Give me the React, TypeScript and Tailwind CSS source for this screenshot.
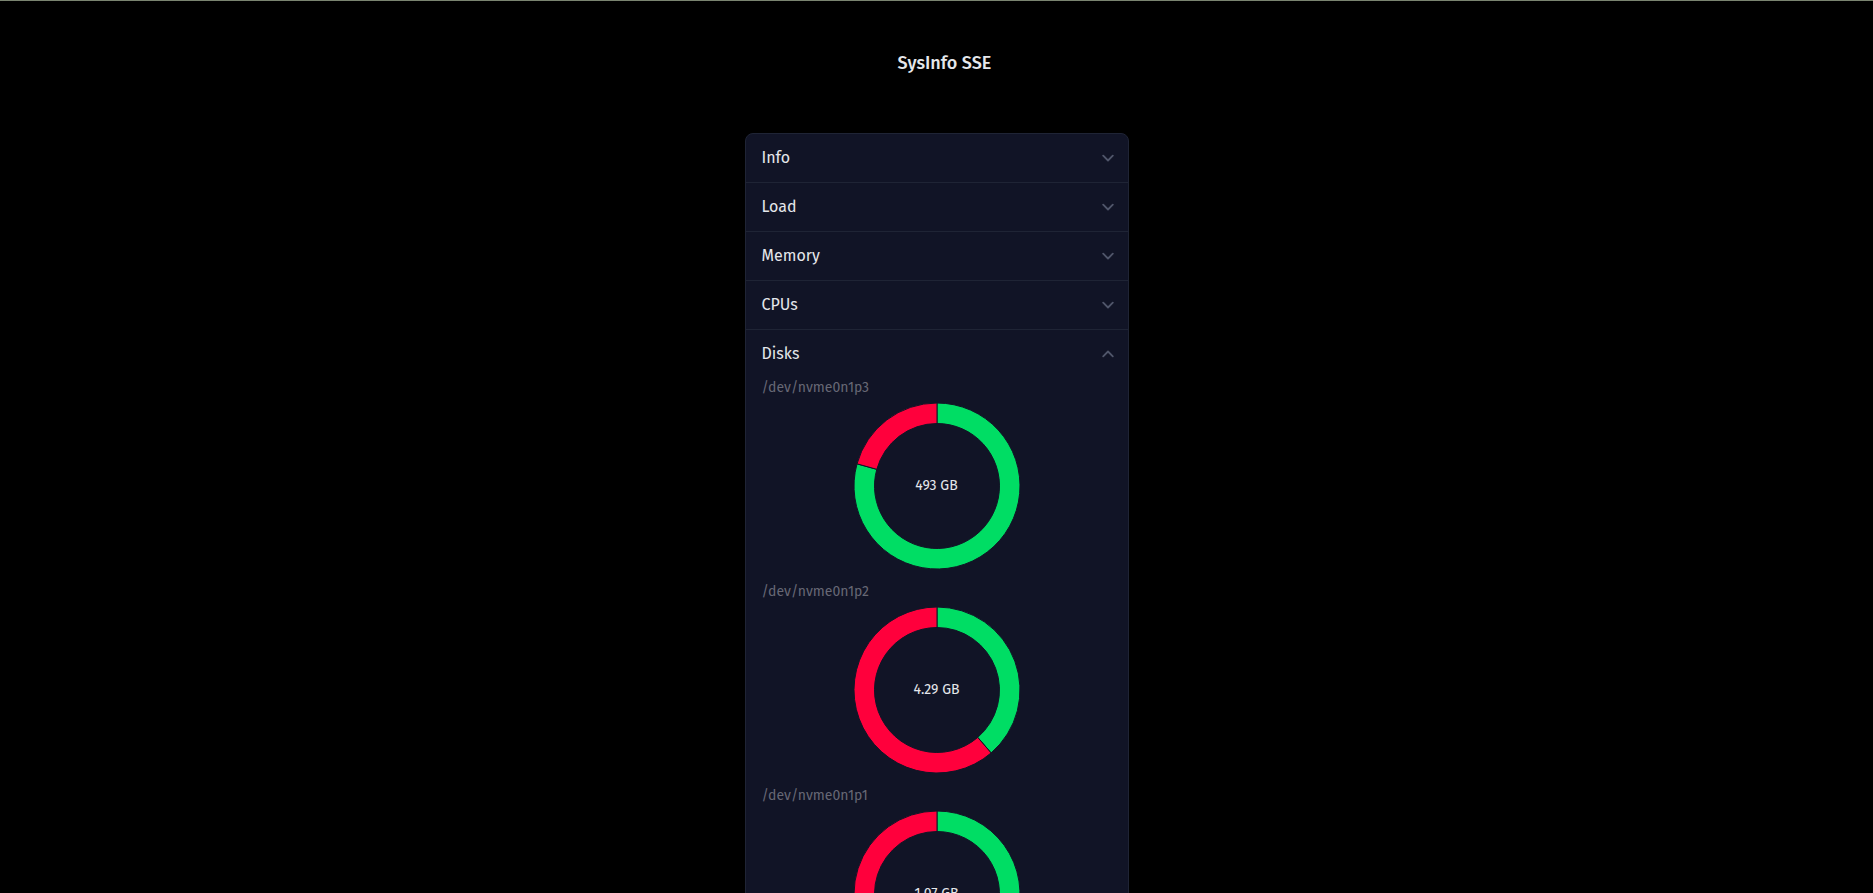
import { useState } from "react";

type Disk = { name: string; size: string; free: number };

const disks: Disk[] = [
  { name: "/dev/nvme0n1p3", size: "493 GB", free: 0.793 },
  { name: "/dev/nvme0n1p2", size: "4.29 GB", free: 0.387 },
  { name: "/dev/nvme0n1p1", size: "1.07 GB", free: 0.6 },
];

function arc(from: number, to: number, outer: number, inner: number) {
  const point = (t: number, r: number) => {
    const a = t * 2 * Math.PI;
    return `${(r * Math.sin(a)).toFixed(3)} ${(-r * Math.cos(a)).toFixed(3)}`;
  };
  const large = to - from > 0.5 ? 1 : 0;
  return `M${point(from, outer)}A${outer} ${outer} 0 ${large} 1 ${point(to, outer)}L${point(to, inner)}A${inner} ${inner} 0 ${large} 0 ${point(from, inner)}Z`;
}

function Donut({ disk }: { disk: Disk }) {
  return (
    <div className="grid place-items-center">
      <svg
        viewBox="-88 -88 176 176"
        className="col-start-1 row-start-1 size-44"
        stroke="#111426"
        strokeWidth="1"
        aria-hidden="true"
      >
        <path d={arc(0, disk.free, 83, 62.5)} fill="#00dd64" />
        <path d={arc(disk.free, 1, 83, 62.5)} fill="#ff003c" />
      </svg>
      <span className="col-start-1 row-start-1 text-sm leading-5 text-gray-200">{disk.size}</span>
    </div>
  );
}

function DiskList() {
  return (
    <ul className="px-4">
      {disks.map((disk) => (
        <li key={disk.name} className="pb-2">
          <h3 className="text-sm leading-5 text-[#676875]">{disk.name}</h3>
          <Donut disk={disk} />
        </li>
      ))}
    </ul>
  );
}

function Chevron({ open }: { open: boolean }) {
  return (
    <svg
      viewBox="0 0 12 12"
      className="size-3"
      fill="none"
      stroke="#50566a"
      strokeWidth="1.8"
      strokeLinecap="round"
      strokeLinejoin="round"
      aria-hidden="true"
    >
      <path d={open ? "M1.2 8.3L6 3.5l4.8 4.8" : "M1.2 3.7L6 8.5l4.8-4.8"} />
    </svg>
  );
}

const sections = ["Info", "Load", "Memory", "CPUs", "Disks"];

export default function App() {
  const [openSection, setOpenSection] = useState("Disks");

  return (
    <div className="h-screen overflow-y-auto border-t border-[#7a8470] bg-black font-['Fira_Sans','Noto_Sans',sans-serif] text-gray-200 [scrollbar-width:none]">
      <header className="flex h-33 justify-center pt-12 pl-4">
        <h1 className="text-lg leading-7 font-medium">SysInfo SSE</h1>
      </header>
      <main className="mx-auto w-full max-w-96 divide-y divide-[#1f2435] rounded-lg border border-[#1f2435] bg-[#111426]">
        {sections.map((name) => {
          const open = name === openSection;
          return (
            <section key={name}>
              <h2>
                <button
                  type="button"
                  aria-expanded={open}
                  onClick={() => setOpenSection(open ? "" : name)}
                  className="flex h-12 w-full cursor-pointer items-center justify-between pr-3.5 pl-4 text-base"
                >
                  {name}
                  <Chevron open={open} />
                </button>
              </h2>
              {open && name === "Disks" && <DiskList />}
            </section>
          );
        })}
      </main>
    </div>
  );
}
